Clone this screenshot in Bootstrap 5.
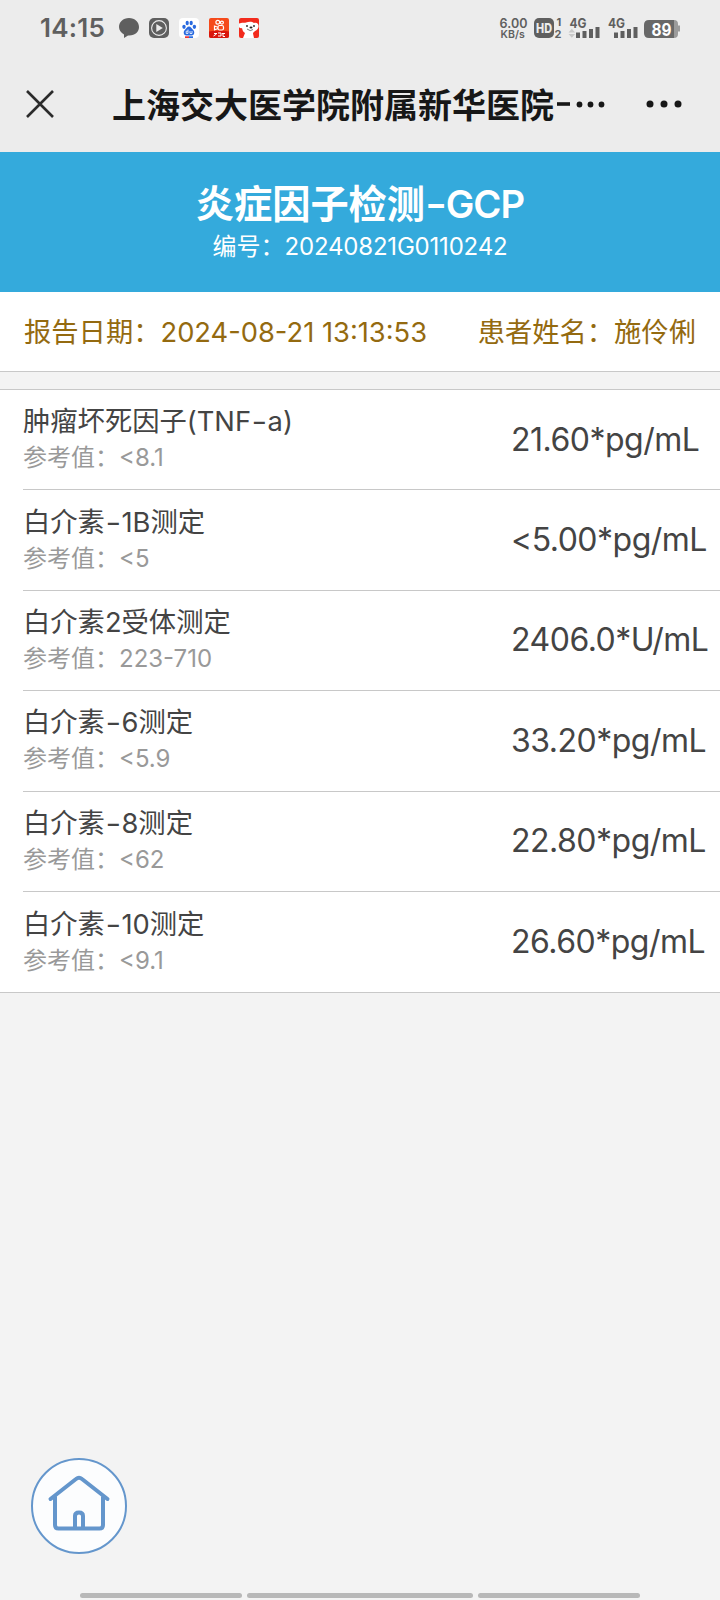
<!DOCTYPE html>
<html lang="zh-CN">
<head>
<meta charset="utf-8">
<meta name="viewport" content="width=device-width, initial-scale=1">
<title>炎症因子检测-GCP</title>
<link href="https://cdn.jsdelivr.net/npm/bootstrap@5.3.0/dist/css/bootstrap.min.css" rel="stylesheet">
<style>
body{background:#f3f3f3;font-family:Inter,"Noto Sans CJK SC",sans-serif;color:#444;height:1600px;overflow:hidden}
.top-area{background:#ececec;height:152px}
.status-bar{height:56px;padding:0 40px 0 40px;color:#5f5f5f}
.clock{font-size:26px;font-weight:600;line-height:56px;width:77px;letter-spacing:.2px}
.app-icons{gap:10px}
.title-bar{height:96px;color:#171717}
.page-name{font-size:34px;font-weight:700;line-height:48px;width:494px;white-space:nowrap;padding-top:4px;margin-left:-1px}
.banner{background:#34aadc;height:140px;color:#fff;padding-top:28px}
.banner h1{font-size:38.2px;font-weight:700;line-height:48px;margin:0}
.banner .latin{font-weight:600;letter-spacing:-1px}
.banner p{font-size:24px;line-height:38px;margin:0}
.serial{letter-spacing:-.2px}
.dash{display:inline-block;transform:scaleX(1.25);margin:0 2px}
.meta-row{height:80px;background:#fff;border-bottom:1px solid #c8c8c8;color:#946a10;font-size:27.3px;padding:3px 24px 0 24px;white-space:nowrap}
.results{margin-top:17px;background:#fff;border-top:1px solid #c8c8c8;border-bottom:1px solid #c8c8c8;border-radius:0;padding-left:23px}
.result{height:100.4px;white-space:nowrap}
.result:first-child{height:99.4px}
.result:last-child{height:101.400px}
.result+.result{border-top:1px solid #c8c8c8}
.result-name{font-size:27.3px;line-height:36px;padding-top:1px}
.result-ref{font-size:24px;line-height:36px;color:#999}
.result-value{font-size:32px;width:209px;line-height:48px;letter-spacing:-.5px}
.home-btn{position:fixed;left:31px;top:1458px;width:96px;height:96px}
.gesture{height:5px;gap:5px;bottom:2px}
.gesture span{background:#b8b8b8;height:5px;width:162px;border-radius:3px}
.gesture .mid{width:226px}
</style>
</head>
<body>
<header class="top-area">
  <div class="status-bar d-flex align-items-center">
    <div class="clock">14:15</div>
    <div class="app-icons d-flex">
      <svg width="22" height="20" viewBox="0 0 22 20"><path fill="#5f5f5f" d="M12 0C6 0 2 4 2 9c0 3 2 6 5 7.400V20l4-2.500C18 18 22 14 22 9s-4-9-10-9Z"/></svg>
      <svg width="20" height="20" viewBox="0 0 20 20"><rect width="20" height="20" rx="5" fill="#5f5f5f"/><circle cx="10" cy="10" r="7.4" fill="none" stroke="#ececec" stroke-width="1.1"/><path fill="#ececec" d="m7.3 6 6.5 4-6.5 4Z"/></svg>
      <svg width="20" height="20" viewBox="0 0 20 20"><rect width="20" height="20" rx="4" fill="#fff"/><g fill="#2869df"><ellipse cx="5" cy="8.8" rx="1.7" ry="2.1"/><ellipse cx="8.2" cy="5" rx="1.6" ry="2.2"/><ellipse cx="12.2" cy="5" rx="1.6" ry="2.2"/><ellipse cx="15.4" cy="8.8" rx="1.7" ry="2.1"/><path d="M10 8.5c2 0 2.5 2 4.2 3.5 2 2 1 5.5-1.5 5.5H7.300c-2.500 0-3.500-3.500-1.500-5.500C7.500 10.500 8 8.500 10 8.500Z"/></g><path stroke="#fff" stroke-width=".8" fill="none" d="M9 11.500v4H7.200v-2.300H9M11 13v2.500h2V13"/><path fill="#e33" d="M6 18.300h4V20H6z"/><path fill="#2869df" d="M10 18.300h4V20h-4z"/></svg>
      <svg width="20" height="20" viewBox="0 0 20 20"><rect width="20" height="20" rx="2" fill="#f54a1b"/><path fill="#d9160c" d="M0 13.500Q10 11.500 20 13.500V18a2 2 0 0 1-2 2H2a2 2 0 0 1-2-2Z"/><g fill="none" stroke="#fff" stroke-width="1.200"><circle cx="8.800" cy="4.200" r="1.900"/><circle cx="12.900" cy="4.600" r="1.500"/><rect x="9" y="7.500" width="5.500" height="4.500" rx="1.500"/><path d="m9 9.300-3.500-1.300v3.800L9 10.500"/></g><path d="M5 15.500h3M4.500 18l3-2M9 15h3v3H9M13 15.500h3M14 15v3.500h2" stroke="#fff" stroke-width="1" fill="none"/></svg>
      <svg width="20" height="20" viewBox="0 0 20 20"><rect width="20" height="20" rx="2" fill="#f22b1d"/><path fill="#fff" d="M0 5.500C3 4 5 5 7 4.500c3-1 6-1 8 .5 3-1 5 1 4.500 4-.5 2-2 3.500-3.500 4-1 1-2 1.500-2 2.500l1 4.500H4l2-5c-2-1-2.500-3-3-5-1 .500-2 0-3-.800Z"/><g fill="#222"><circle cx="8" cy="8" r=".9"/><circle cx="15" cy="8" r=".9"/><ellipse cx="12" cy="9.500" rx="1.500" ry="1"/></g><path d="M8 11q3.500 3 6 .5" stroke="#444" stroke-width=".7" fill="none"/></svg>
    </div>
    <svg class="ms-auto" width="181" height="24" viewBox="499 16 181 24" font-family="Inter" font-weight="600" fill="#5f5f5f">
      <text font-size="12.500" letter-spacing=".1"><tspan x="499.500" y="27.500">6.00</tspan><tspan x="500.500" y="37.500" font-size="10.500">KB/s</tspan></text>
      <rect x="534" y="18" width="20" height="20" rx="5"/>
      <text x="536" y="32.700" fill="#ececec" font-size="13" font-weight="800" textLength="16" lengthAdjust="spacingAndGlyphs">HD</text>
      <text font-size="11" font-weight="700"><tspan x="556.500" y="26">1</tspan><tspan x="554.500" y="37.500">2</tspan></text>
      <text x="569.500" y="27.500" font-size="13" font-weight="700" textLength="17" lengthAdjust="spacingAndGlyphs">4G</text>
      <path fill="#c9c9c9" d="m568.500 32.500 3.300-3.800 3.300 3.800zM568.500 34l3.300 3.800 3.300-3.800z"/>
      <path stroke="#5f5f5f" stroke-width="4" d="M578 32.500v5.500M584.500 31v7M591 29v9M597.500 27v11"/>
      <text x="608" y="27.500" font-size="13" font-weight="700" textLength="17" lengthAdjust="spacingAndGlyphs">4G</text>
      <path stroke="#5f5f5f" stroke-width="4" d="M616 32.500v5.500M622.500 31v7M629 29v9M635.500 27v11"/>
      <path fill="#9b9b9b" d="M670 20h4q4 0 4 4v1.500h2v6h-2V34q0 4-4 4h-4z"/><path fill="#686868" d="M649 20h25v18h-25q-5 0-5-5v-8q0-5 5-5Z"/>
      <text x="651.500" y="35.500" font-size="17.500" font-weight="700" fill="#fff" textLength="20" lengthAdjust="spacingAndGlyphs">89</text>
    </svg>
  </div>
  <div class="title-bar d-flex align-items-center">
    <svg width="113" height="96" viewBox="0 0 113 96" class="flex-shrink-0"><path d="m27 35 26 26M53 35 27 61" stroke="#2b2b2b" stroke-width="2.600"/></svg>
    <div class="page-name d-flex align-items-center">上海交大医学院附属新华医院<svg width="52" height="34" viewBox="0 0 52 34"><path d="M3 15h13" stroke="#171717" stroke-width="3.600"/><g fill="#171717"><circle cx="25.500" cy="15.500" r="2.900"/><circle cx="36.500" cy="15.500" r="2.900"/><circle cx="47.500" cy="15.500" r="2.900"/></g></svg></div>
    <svg width="80" height="20" viewBox="0 0 80 20" class="ms-auto"><g fill="#171717"><circle cx="10" cy="10" r="3.500"/><circle cx="24" cy="10" r="3.500"/><circle cx="38" cy="10" r="3.500"/></g></svg>
  </div>
</header>
<main>
  <section class="banner text-center">
    <h1>炎症因子检测<span class="latin"><span class="dash">-</span>GCP</span></h1>
    <p>编号：<span class="serial">20240821G0110242</span></p>
  </section>
  <section class="meta-row d-flex justify-content-between align-items-center">
    <div>报告日期：<span class="stamp">2024-08-21 13:13:53</span></div>
    <div>患者姓名：施伶俐</div>
  </section>
  <section class="results">
    <div class="result d-flex align-items-center justify-content-between"><div><div class="result-name">肿瘤坏死因子(TNF<span class="dash">-</span>a)</div><div class="result-ref">参考值：&lt;8.1</div></div><div class="result-value">21.60*pg/mL</div></div>
    <div class="result d-flex align-items-center justify-content-between"><div><div class="result-name">白介素<span class="dash">-</span>1B测定</div><div class="result-ref">参考值：&lt;5</div></div><div class="result-value">&lt;5.00*pg/mL</div></div>
    <div class="result d-flex align-items-center justify-content-between"><div><div class="result-name">白介素2受体测定</div><div class="result-ref">参考值：223-710</div></div><div class="result-value">2406.0*U/mL</div></div>
    <div class="result d-flex align-items-center justify-content-between"><div><div class="result-name">白介素<span class="dash">-</span>6测定</div><div class="result-ref">参考值：&lt;5.9</div></div><div class="result-value">33.20*pg/mL</div></div>
    <div class="result d-flex align-items-center justify-content-between"><div><div class="result-name">白介素<span class="dash">-</span>8测定</div><div class="result-ref">参考值：&lt;62</div></div><div class="result-value">22.80*pg/mL</div></div>
    <div class="result d-flex align-items-center justify-content-between"><div><div class="result-name">白介素<span class="dash">-</span>10测定</div><div class="result-ref">参考值：&lt;9.1</div></div><div class="result-value">26.60*pg/mL</div></div>
  </section>
</main>
<a class="home-btn" href="#" aria-label="首页">
  <svg class="d-block" width="96" height="96" viewBox="0 0 96 96"><circle cx="48" cy="48" r="47" fill="#fcfdfe" stroke="#6496cc" stroke-width="2"/><g fill="none" stroke="#6496cc" stroke-width="4" stroke-linecap="round" stroke-linejoin="round"><path d="M19.500 41 45 21q3-2.500 6 0l25.500 20M24 39v28q0 3.500 3.500 3.500h41q3.500 0 3.500-3.500V39M44 70V58q0-3.500 4-3.500t4 3.500v12"/></g></svg>
</a>
<div class="gesture position-fixed start-0 w-100 d-flex justify-content-center"><span></span><span class="mid"></span><span></span></div>
<script src="https://cdn.jsdelivr.net/npm/bootstrap@5.3.0/dist/js/bootstrap.bundle.min.js"></script>
</body>
</html>
